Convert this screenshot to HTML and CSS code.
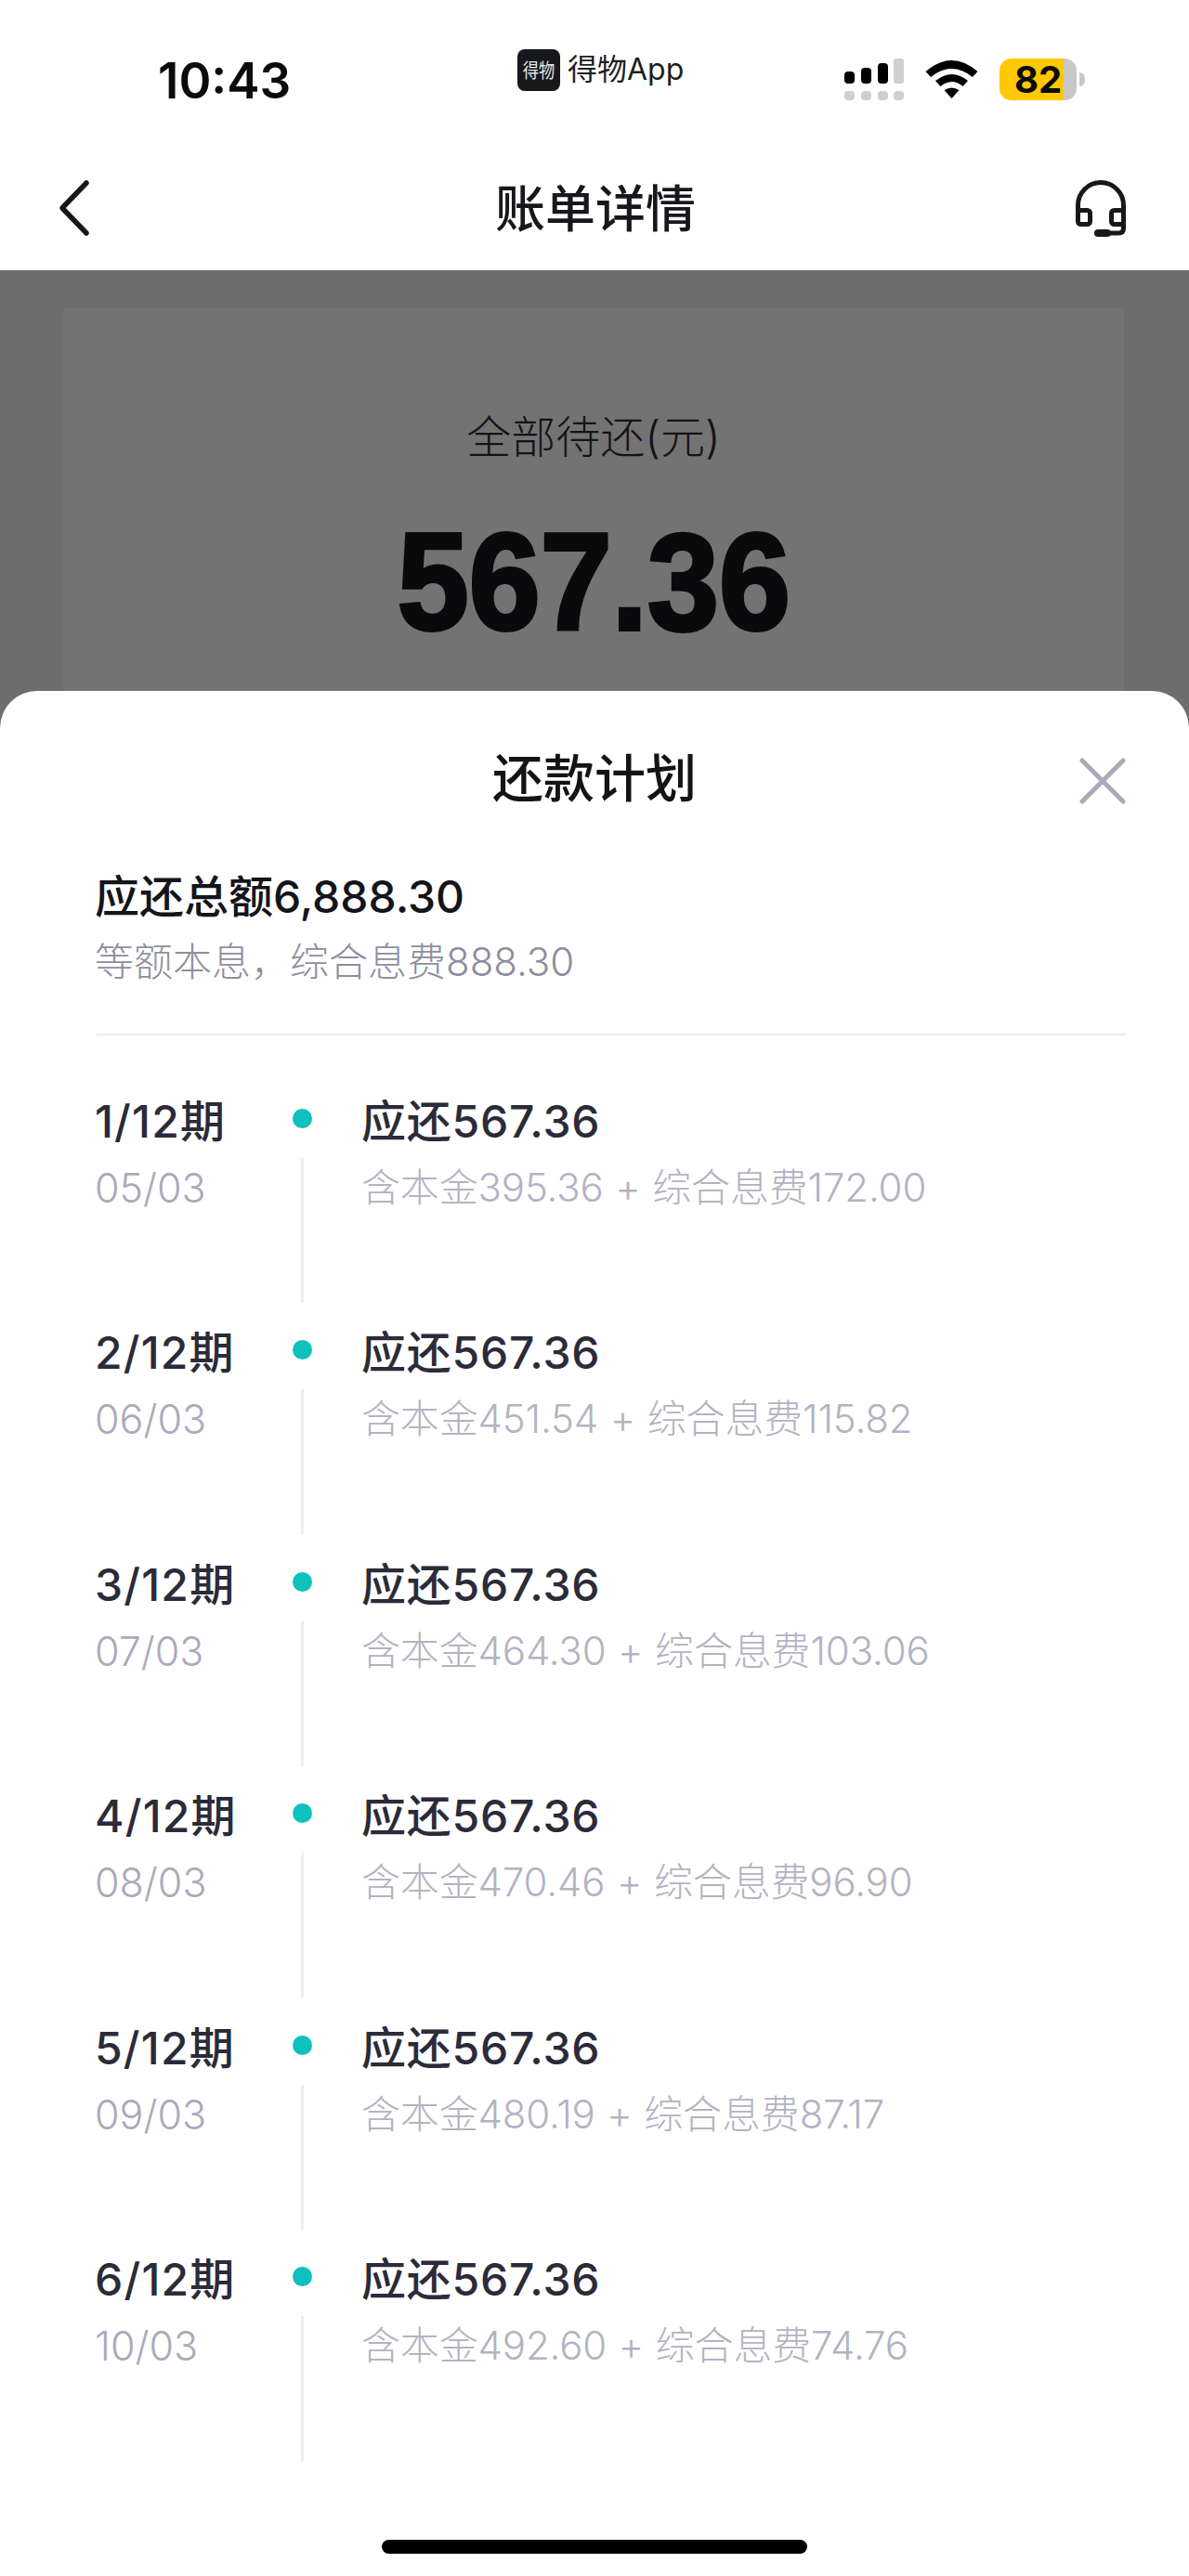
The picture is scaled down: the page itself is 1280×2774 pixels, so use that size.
FILE: index.html
```html
<!DOCTYPE html>
<html lang="zh-CN">
<head>
<meta charset="utf-8">
<title>账单详情</title>
<link rel="stylesheet" href="styles.css">
</head>
<body>
<div class="page">
  <header class="top">
    <div class="status">
      <span class="time">10:43</span>
      <div class="carrier">
        <span class="logo"><span class="logo-text">得物</span></span>
        <span class="carrier-name">得物App</span>
      </div>
      <svg class="signal" width="64" height="45" viewBox="0 0 64 45">
        <rect x="0" y="14" width="11" height="13" rx="4" fill="#000"/>
        <rect x="18" y="10" width="11" height="17" rx="4" fill="#000"/>
        <rect x="36" y="5" width="11" height="22" rx="4" fill="#000"/>
        <rect x="53" y="0" width="11" height="27" rx="3" fill="#cfcfcf"/>
        <rect x="0" y="35" width="11" height="10" rx="4" fill="#cfcfcf"/>
        <rect x="18" y="35" width="11" height="10" rx="4" fill="#cfcfcf"/>
        <rect x="36" y="35" width="11" height="10" rx="4" fill="#cfcfcf"/>
        <rect x="53" y="35" width="11" height="10" rx="4" fill="#cfcfcf"/>
      </svg>
      <svg class="wifi" width="57" height="41" viewBox="0 0 57 41">
        <path d="M0.5 12Q28.5 -12 56.5 12L51 18Q28.5 0 6 18Z" fill="#000"/>
        <path d="M11 22Q28.5 8 46 22L40.5 28Q28.5 18 16.5 28Z" fill="#000"/>
        <path d="M20.5 32Q28.5 27 36.5 32L28.5 41Z" fill="#000"/>
      </svg>
      <div class="battery"><span class="battery-level">82</span></div>
      <span class="battery-nub"></span>
    </div>
    <nav class="nav">
      <svg class="nav-back" width="40" height="64" viewBox="0 0 40 64">
        <path d="M31 5L5 32L31 59" fill="none" stroke="#17181c" stroke-width="5.5" stroke-linecap="round" stroke-linejoin="round"/>
      </svg>
      <h1 class="nav-title">账单详情</h1>
      <svg class="nav-service" width="54" height="62" viewBox="0 0 54 62">
        <path d="M2.5 34V27A24.5 24.5 0 0 1 51.5 27V34" fill="none" stroke="#17181c" stroke-width="5"/>
        <rect x="2.5" y="32.5" width="13" height="15" rx="3" fill="none" stroke="#17181c" stroke-width="5"/>
        <rect x="38.5" y="32.5" width="13" height="15" rx="3" fill="none" stroke="#17181c" stroke-width="5"/>
        <path d="M51.5 46V52Q51.5 57 46 57H24" fill="none" stroke="#17181c" stroke-width="5" stroke-linecap="round"/>
        <path d="M24 57H34" fill="none" stroke="#17181c" stroke-width="8" stroke-linecap="round"/>
      </svg>
    </nav>
  </header>

  <main class="backdrop">
    <section class="due-card">
      <p class="due-label">全部待还(元)</p>
      <p class="due-amount"><span class="due-digits">567.36</span></p>
    </section>
  </main>

  <section class="sheet">
    <div class="sheet-head">
      <span></span>
      <h2 class="sheet-title">还款计划</h2>
      <svg class="sheet-close" width="50" height="50" viewBox="0 0 50 50">
        <path d="M3 3L47 47M47 3L3 47" fill="none" stroke="#aaaabb" stroke-width="5" stroke-linecap="round"/>
      </svg>
    </div>
    <div class="summary">
      <p class="summary-total">应还总额6,888.30</p>
      <p class="summary-sub">等额本息，综合息费888.30</p>
    </div>
    <ol class="plan">
      <li class="plan-row">
        <div class="plan-when"><p class="plan-term">1/12期</p><p class="plan-date">05/03</p></div>
        <div class="plan-axis"><span class="plan-dot"></span><span class="plan-line"></span></div>
        <div class="plan-what"><p class="plan-due">应还567.36</p><p class="plan-detail">含本金395.36 + 综合息费172.00</p></div>
      </li>
      <li class="plan-row">
        <div class="plan-when"><p class="plan-term">2/12期</p><p class="plan-date">06/03</p></div>
        <div class="plan-axis"><span class="plan-dot"></span><span class="plan-line"></span></div>
        <div class="plan-what"><p class="plan-due">应还567.36</p><p class="plan-detail">含本金451.54 + 综合息费115.82</p></div>
      </li>
      <li class="plan-row">
        <div class="plan-when"><p class="plan-term">3/12期</p><p class="plan-date">07/03</p></div>
        <div class="plan-axis"><span class="plan-dot"></span><span class="plan-line"></span></div>
        <div class="plan-what"><p class="plan-due">应还567.36</p><p class="plan-detail">含本金464.30 + 综合息费103.06</p></div>
      </li>
      <li class="plan-row">
        <div class="plan-when"><p class="plan-term">4/12期</p><p class="plan-date">08/03</p></div>
        <div class="plan-axis"><span class="plan-dot"></span><span class="plan-line"></span></div>
        <div class="plan-what"><p class="plan-due">应还567.36</p><p class="plan-detail">含本金470.46 + 综合息费96.90</p></div>
      </li>
      <li class="plan-row">
        <div class="plan-when"><p class="plan-term">5/12期</p><p class="plan-date">09/03</p></div>
        <div class="plan-axis"><span class="plan-dot"></span><span class="plan-line"></span></div>
        <div class="plan-what"><p class="plan-due">应还567.36</p><p class="plan-detail">含本金480.19 + 综合息费87.17</p></div>
      </li>
      <li class="plan-row">
        <div class="plan-when"><p class="plan-term">6/12期</p><p class="plan-date">10/03</p></div>
        <div class="plan-axis"><span class="plan-dot"></span><span class="plan-line"></span></div>
        <div class="plan-what"><p class="plan-due">应还567.36</p><p class="plan-detail">含本金492.60 + 综合息费74.76</p></div>
      </li>
    </ol>
    <div class="home-indicator"></div>
  </section>
</div>
</body>
</html>
```
FILE: styles.css
```css
* { box-sizing: border-box; }
html, body { margin: 0; padding: 0; }
body {
  font-family: Inter, "Noto Sans CJK SC", sans-serif;
  background: #6d6d6e;
}
p, h1, h2, ol { margin: 0; padding: 0; }
ol { list-style: none; }

.page {
  position: relative;
  width: 1280px;
  height: 2774px;
  overflow: hidden;
  display: flex;
  flex-direction: column;
}

/* top area */
.top { background: #fff; height: 291px; flex: none; }
.status {
  height: 160px;
  display: flex;
  align-items: flex-start;
  padding-left: 170px;
}
.time {
  width: 141px;
  margin-top: 56px;
  font-size: 53px;
  line-height: 62px;
  font-weight: 600;
  color: #0b0b0d;
  white-space: nowrap;
}
.carrier {
  margin-left: 246px;
  margin-top: 53px;
  display: flex;
  align-items: center;
  gap: 8px;
  width: 176px;
}
.logo {
  width: 46px;
  height: 45px;
  border-radius: 8px;
  background: #17181c;
  display: flex;
  align-items: center;
  justify-content: center;
  flex: none;
}
.logo-text {
  font-size: 21px;
  line-height: 24px;
  font-weight: 400;
  color: #e8e8e8;
  white-space: nowrap;
  transform: scaleX(0.82);
}
.carrier-name {
  font-size: 32px;
  line-height: 40px;
  color: #1e1e20;
  white-space: nowrap;
  margin-top: -1px;
}
.signal { margin-left: 176px; margin-top: 63px; flex: none; }
.wifi { margin-left: 23px; margin-top: 65px; flex: none; }
.battery {
  margin-left: 23px;
  margin-top: 63px;
  width: 83px;
  height: 45px;
  border-radius: 13px;
  background: linear-gradient(90deg, #ffc800 83%, #c8c8c8 83%);
  flex: none;
  padding-left: 16px;
}
.battery-level {
  font-size: 40px;
  line-height: 45px;
  font-weight: 700;
  color: #0b0b0b;
  display: block;
}
.battery-nub {
  margin-left: 3px;
  margin-top: 78px;
  width: 6px;
  height: 15px;
  border-radius: 0 8px 8px 0;
  background: #c8c8c8;
  flex: none;
}

.nav {
  display: grid;
  grid-template-columns: 1fr auto 1fr;
  align-items: center;
  height: 131px;
  padding: 0 68px 0 70px;
}
.nav-back { margin-top: -3px; margin-left: -8px; }
.nav-title {
  font-size: 54px;
  line-height: 64px;
  font-weight: 500;
  color: #17181c;
}
.nav-service { justify-self: end; margin-top: -2px; }

/* dimmed page behind the sheet */
.backdrop { flex: 1; padding: 41px 70px 0 68px; background: #6d6d6e; }
.due-card {
  height: 500px;
  background: #737373;
  text-align: center;
}
.due-label {
  padding-top: 106px;
  font-size: 48px;
  line-height: 66px;
  font-weight: 300;
  color: #141416;
}
.due-amount {
  margin-top: 38px;
  font-size: 148px;
  line-height: 170px;
  font-weight: 700;
  font-family: "Liberation Sans", sans-serif;
  color: #0a0a0c;
}
.due-digits {
  display: inline-block;
  transform: scaleX(0.935);
  -webkit-text-stroke: 4px #0a0a0c;
}

/* bottom sheet */
.sheet {
  position: absolute;
  left: 0;
  right: 0;
  top: 744px;
  bottom: 0;
  background: #fff;
  border-radius: 40px 40px 0 0;
  padding: 59px 68px 0 102px;
}
.sheet-head {
  display: grid;
  grid-template-columns: 1fr auto 1fr;
  align-items: center;
  margin-left: -34px;
}
.sheet-title {
  font-size: 55px;
  line-height: 70px;
  font-weight: 500;
  color: #141416;
}
.sheet-close { justify-self: end; margin-top: 6px; }
.summary { margin-top: 63px; padding-bottom: 52px; border-bottom: 2px solid #ececee; margin-left: 2px; }
.summary-total {
  font-size: 48px;
  line-height: 60px;
  font-weight: 500;
  color: #14151a;
  margin-left: -2px;
}
.summary-sub {
  margin-top: 15px;
  font-size: 42px;
  line-height: 50px;
  font-weight: 300;
  color: #8e8e9e;
  margin-left: -2px;
}

.plan { margin-top: 63px; }
.plan-row {
  height: 249.4px;
  display: flex;
  align-items: flex-start;
}
.plan-when { width: 213px; flex: none; }
.plan-term, .plan-due {
  font-size: 48px;
  line-height: 60px;
  font-weight: 500;
  letter-spacing: 0.8px;
  color: #2b2b39;
  white-space: nowrap;
}
.plan-term { letter-spacing: 1.2px; }
.plan-date, .plan-detail {
  margin-top: 11px;
  font-size: 42px;
  line-height: 60px;
  font-weight: 300;
  white-space: nowrap;
}
.plan-date { color: #aaaabb; font-size: 43px; }
.plan-detail { color: #b3b3c2; word-spacing: 1px; letter-spacing: -0.15px; }
.plan-axis {
  width: 21px;
  flex: none;
  padding-top: 16px;
  display: flex;
  flex-direction: column;
  align-items: center;
}
.plan-dot { width: 21px; height: 21px; border-radius: 50%; background: #0dc1bd; flex: none; }
.plan-line { width: 3px; height: 156px; margin-top: 32px; background: #eeeef0; flex: none; }
.plan-what { margin-left: 53px; }

.home-indicator {
  position: absolute;
  left: 411px;
  bottom: 24px;
  width: 458px;
  height: 15px;
  border-radius: 8px;
  background: #000;
}
```
